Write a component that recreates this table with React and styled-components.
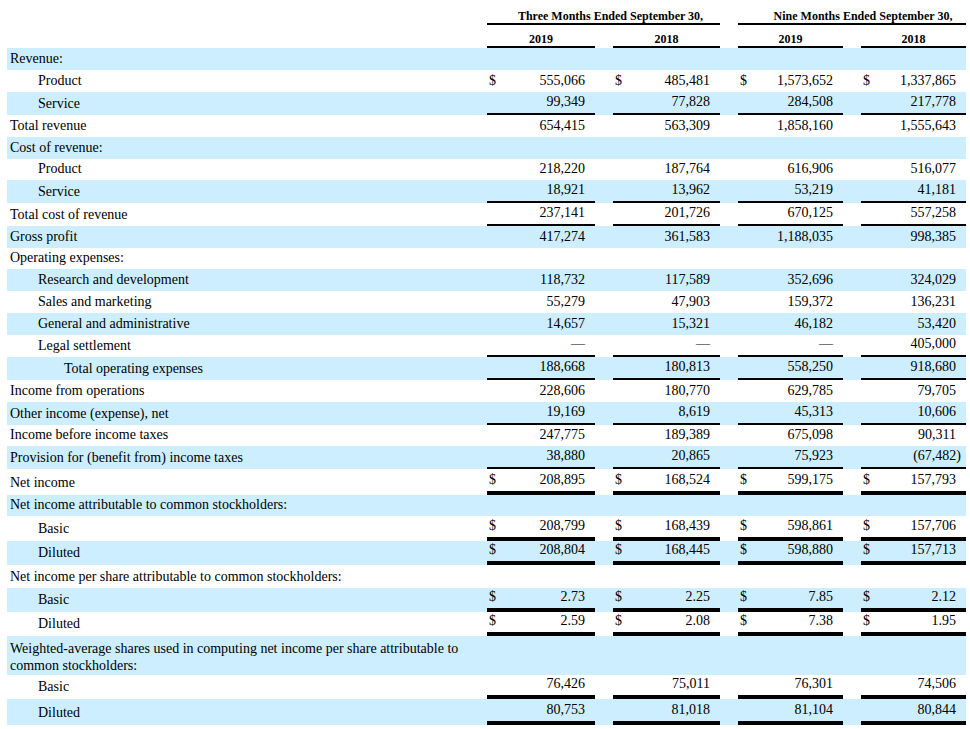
import React from 'react';
import styled, { createGlobalStyle } from 'styled-components';

const GlobalStyle = createGlobalStyle`
  html, body { margin: 0; padding: 0; background: #fff; }
  body {
    font-family: "Liberation Serif", "Times New Roman", serif;
    color: #000;
  }
`;

const COLS = '462px 108px 107px 105px 105px';

const Page = styled.div`
  width: 959px;
  padding: 0 4px 0 7px;
`;

const HeadRow = styled.div`
  display: grid;
  grid-template-columns: ${COLS};
  column-gap: 18px;
  height: ${(p) => p.$h}px;
  font-size: 12px;
  line-height: 14px;
  font-weight: bold;
`;

const HeadCell = styled.div`
  grid-column: ${(p) => p.$col};
  display: flex;
  align-items: flex-end;
  justify-content: center;
  padding-left: ${(p) => p.$offset || 0}px;
  border-bottom: 2px solid #000;
  white-space: nowrap;
`;

const Row = styled.div`
  display: grid;
  grid-template-columns: ${COLS};
  column-gap: 18px;
  height: ${(p) => p.$h}px;
  background: ${(p) => (p.$shade ? '#cceeff' : 'transparent')};
  font-size: 14px;
  line-height: 16px;
`;

const INDENTS = [3, 31, 57];
const LABEL_RAISE = { single: 0, double: 1 };

const Label = styled.div`
  grid-column: 1;
  align-self: end;
  padding: 0 0 ${(p) => (p.$pb ?? 3) + (LABEL_RAISE[p.$line] || 0)}px ${(p) => INDENTS[p.$indent || 0]}px;
  line-height: ${(p) => p.$lh || 16}px;
`;

const LINES = {
  single: '2px solid #000',
  double: '4px solid #000',
};

const Cell = styled.div`
  display: flex;
  justify-content: space-between;
  align-items: flex-end;
  padding: 0 10px 3px 2px;
  border-bottom: ${(p) => LINES[p.$line] || 'none'};
  white-space: nowrap;
`;

const Dollar = styled.span``;

const Num = styled.span``;

const Hang = styled.span`
  margin-right: -5px;
`;

const rows = [
  { label: 'Revenue:', shade: true, h: 22 },
  { label: 'Product', indent: 1, h: 22, dollar: true, vals: ['555,066', '485,481', '1,573,652', '1,337,865'] },
  { label: 'Service', indent: 1, shade: true, h: 23, line: 'single', vals: ['99,349', '77,828', '284,508', '217,778'] },
  { label: 'Total revenue', h: 22, vals: ['654,415', '563,309', '1,858,160', '1,555,643'] },
  { label: 'Cost of revenue:', shade: true, h: 22 },
  { label: 'Product', indent: 1, h: 21, vals: ['218,220', '187,764', '616,906', '516,077'] },
  { label: 'Service', indent: 1, shade: true, h: 23, line: 'single', vals: ['18,921', '13,962', '53,219', '41,181'] },
  { label: 'Total cost of revenue', h: 23, line: 'single', vals: ['237,141', '201,726', '670,125', '557,258'] },
  { label: 'Gross profit', shade: true, h: 22, vals: ['417,274', '361,583', '1,188,035', '998,385'] },
  { label: 'Operating expenses:', h: 21 },
  { label: 'Research and development', indent: 1, shade: true, h: 22, vals: ['118,732', '117,589', '352,696', '324,029'] },
  { label: 'Sales and marketing', indent: 1, h: 22, vals: ['55,279', '47,903', '159,372', '136,231'] },
  { label: 'General and administrative', indent: 1, shade: true, h: 22, vals: ['14,657', '15,321', '46,182', '53,420'] },
  { label: 'Legal settlement', indent: 1, h: 22, line: 'single', vals: ['—', '—', '—', '405,000'] },
  { label: 'Total operating expenses', indent: 2, shade: true, h: 23, line: 'single', vals: ['188,668', '180,813', '558,250', '918,680'] },
  { label: 'Income from operations', h: 22, vals: ['228,606', '180,770', '629,785', '79,705'] },
  { label: 'Other income (expense), net', shade: true, h: 23, line: 'single', vals: ['19,169', '8,619', '45,313', '10,606'] },
  { label: 'Income before income taxes', h: 21, vals: ['247,775', '189,389', '675,098', '90,311'] },
  { label: 'Provision for (benefit from) income taxes', shade: true, h: 23, line: 'single', vals: ['38,880', '20,865', '75,923', '(67,482)'] },
  { label: 'Net income', h: 26, line: 'double', dollar: true, vals: ['208,895', '168,524', '599,175', '157,793'] },
  { label: 'Net income attributable to common stockholders:', shade: true, h: 21 },
  { label: 'Basic', indent: 1, h: 25, line: 'double', dollar: true, vals: ['208,799', '168,439', '598,861', '157,706'] },
  { label: 'Diluted', indent: 1, shade: true, h: 24, line: 'double', dollar: true, vals: ['208,804', '168,445', '598,880', '157,713'] },
  { label: 'Net income per share attributable to common stockholders:', h: 23 },
  { label: 'Basic', indent: 1, shade: true, h: 24, line: 'double', dollar: true, vals: ['2.73', '2.25', '7.85', '2.12'] },
  { label: 'Diluted', indent: 1, h: 24, line: 'double', dollar: true, vals: ['2.59', '2.08', '7.38', '1.95'] },
  { label: 'Weighted-average shares used in computing net income per share attributable to common stockholders:', shade: true, h: 39, lh: 17, pb: 1 },
  { label: 'Basic', indent: 1, h: 24, line: 'double', vals: ['76,426', '75,011', '76,301', '74,506'] },
  { label: 'Diluted', indent: 1, shade: true, h: 26, line: 'double', vals: ['80,753', '81,018', '81,104', '80,844'] },
];

function Value({ v }) {
  if (v.endsWith(')')) {
    return (
      <Num>
        {v.slice(0, -1)}
        <Hang>)</Hang>
      </Num>
    );
  }
  return <Num>{v}</Num>;
}

export default function App() {
  return (
    <>
      <GlobalStyle />
      <Page>
        <HeadRow $h={25}>
          <HeadCell $col="2 / 4" $offset={14}>Three Months Ended September 30,</HeadCell>
          <HeadCell $col="4 / 6" $offset={22}>Nine Months Ended September 30,</HeadCell>
        </HeadRow>
        <HeadRow $h={23}>
          <HeadCell $col="2">2019</HeadCell>
          <HeadCell $col="3">2018</HeadCell>
          <HeadCell $col="4">2019</HeadCell>
          <HeadCell $col="5">2018</HeadCell>
        </HeadRow>
        {rows.map((r, i) => (
          <Row key={i} $h={r.h} $shade={r.shade}>
            <Label $indent={r.indent} $lh={r.lh} $pb={r.pb} $line={r.line}>{r.label}</Label>
            {r.vals &&
              r.vals.map((v, j) => (
                <Cell key={j} $line={r.line}>
                  <Dollar>{r.dollar ? '$' : ''}</Dollar>
                  <Value v={v} />
                </Cell>
              ))}
          </Row>
        ))}
      </Page>
    </>
  );
}
